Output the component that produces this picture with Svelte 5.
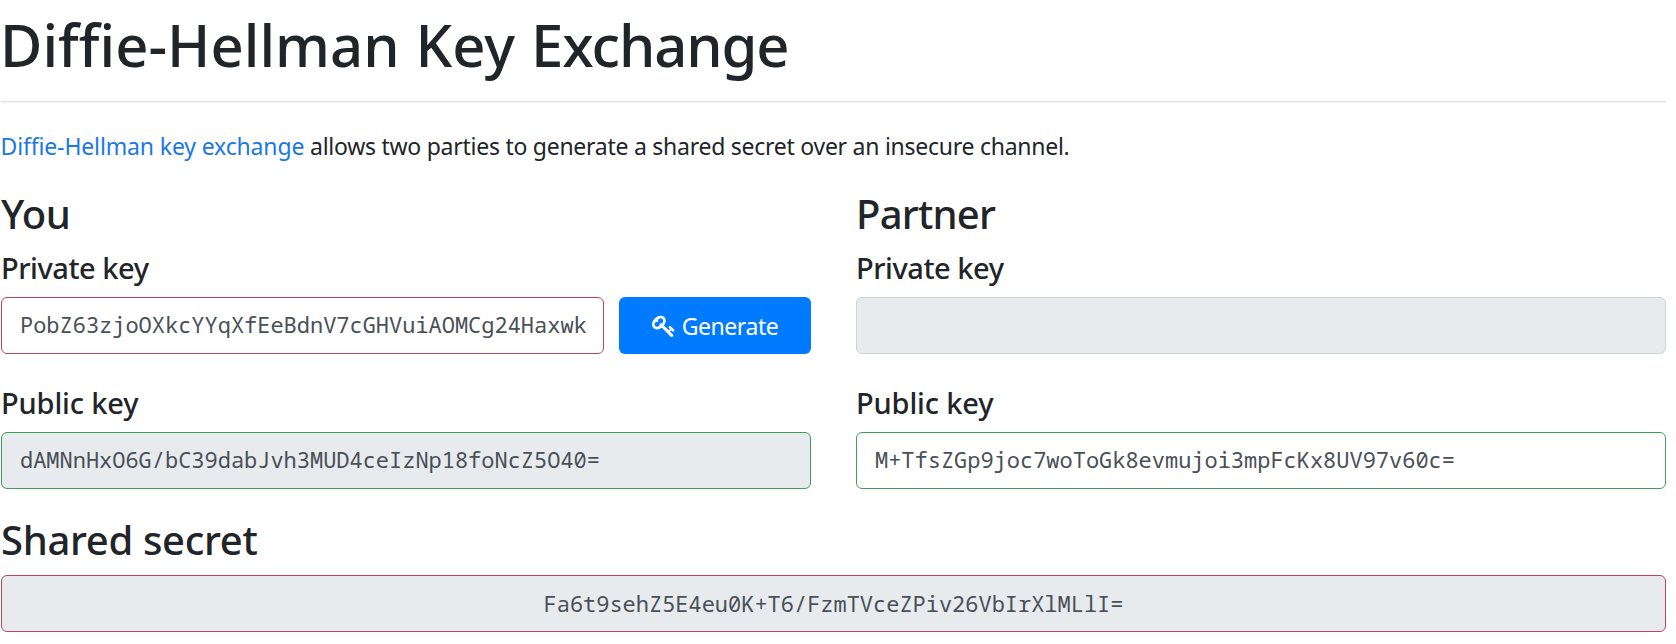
<script>
  let privateKey = $state('PobZ63zjoOXkcYYqXfEeBdnV7cGHVuiAOMCg24Haxwk');
  let partnerPublicKey = $state('M+TfsZGp9joc7woToGk8evmujoi3mpFcKx8UV97v60c=');
  const publicKey = 'dAMNnHxO6G/bC39dabJvh3MUD4ceIzNp18foNcZ5O40=';
  const sharedSecret = 'Fa6t9sehZ5E4eu0K+T6/FzmTVceZPiv26VbIrXlMLlI=';
</script>

<main>
  <h1>Diffie-Hellman Key <span class="tight">Exchange</span></h1>
  <hr />
  <p><a href="#wiki">Diffie-Hellman key exchange</a> allows two parties to generate a shared secret over an insecure channel.</p>

  <div class="columns">
    <section>
      <h2>You</h2>
      <h3 class="private">Private key</h3>
      <div class="group">
        <input class="invalid" aria-label="Private key" spellcheck="false" bind:value={privateKey} />
        <button type="button">
          <svg viewBox="0 0 1792 1792" aria-hidden="true"><path d="M832 512q0-80-56-136t-136-56-136 56-56 136q0 42 19 83-41-19-83-19-80 0-136 56t-56 136 56 136 136 56 136-56 56-136q0-42-19-83 41 19 83 19 80 0 136-56t56-136zm851 704q0 17-49 66t-66 49q-9 0-28.500-16t-36.500-33-38.500-40-24.500-26l-96 96 220 220q28 28 28 68 0 42-39 81t-81 39q-40 0-68-28l-671-671q-176 131-365 131-163 0-265.500-102.500t-102.500-265.500q0-160 95-313t248-248 313-95q163 0 265.500 102.500t102.500 265.500q0 189-131 365l355 355 96-96q-3-3-26-24.500t-40-38.500-33-36.500-16-28.500q0-17 49-66t66-49q13 0 23 10 6 6 46 44.500t82 79.500 86.500 86 73 78 28.500 41z" /></svg>
          <span>Generate</span>
        </button>
      </div>
      <h3 class="public">Public key</h3>
      <input class="valid" aria-label="Public key" readonly value={publicKey} />
    </section>

    <section>
      <h2 class="partner">Partner</h2>
      <h3 class="private">Private key</h3>
      <div class="group"><input aria-label="Partner private key" readonly /></div>
      <h3 class="public">Public key</h3>
      <input class="valid" aria-label="Partner public key" spellcheck="false" bind:value={partnerPublicKey} />
    </section>
  </div>

  <h2 class="shared">Shared secret</h2>
  <input class="invalid center" aria-label="Shared secret" readonly value={sharedSecret} />
</main>

<style>
  :global(body) { background: #fff; }
  main {
    box-sizing: border-box;
    width: 1666px;
    padding: 9px 0 0 1px;
    color: #212529;
    font-family: 'Segoe UI', 'Noto Sans', sans-serif;
  }
  h1, h2, h3, p { margin: 0; font-weight: 500; }
  h1 {
    margin-left: -1px;
    font-size: 58px;
    font-variant-ligatures: none;
    line-height: 72px;
    letter-spacing: 0;
    word-spacing: 1px;
  }
  .tight { letter-spacing: -1.1px; }
  hr {
    height: 1px;
    margin: 20px 0 26px;
    border: 0;
    background: #e0e0e0;
    box-shadow: 0 1px #f2f2f2;
  }
  p {
    margin-left: -0.5px;
    font-size: 23px;
    font-weight: 400;
    line-height: 36px;
    letter-spacing: -0.26px;
  }
  a { color: #1a78e6; text-decoration: none; letter-spacing: -0.14px; }
  .columns {
    display: grid;
    grid-template-columns: 810px 810px;
    column-gap: 45px;
    padding-top: 25px;
  }
  h2 { font-size: 40px; line-height: 50px; letter-spacing: -0.5px; }
  h3 { margin: 0 0 11px; font-size: 29px; line-height: 36px; }
  .partner { letter-spacing: -0.75px; }
  .private { margin-top: 11px; letter-spacing: -0.45px; }
  .public { margin-top: 31px; letter-spacing: -0.15px; }
  .shared { margin-top: 26px; margin-bottom: 10px; letter-spacing: -0.33px; }
  .group { display: flex; gap: 15px; }
  input {
    display: block;
    box-sizing: border-box;
    width: 100%;
    min-width: 0;
    height: 57px;
    margin: 0;
    padding: 0 15px 3px 18px;
    border: 1px solid #ced4da;
    border-radius: 6px;
    outline: 0;
    background: #fff;
    color: #495057;
    font: 22px Consolas, 'Noto Sans Mono', 'DejaVu Sans Mono', monospace;
    letter-spacing: -0.02px;
  }
  input:read-only { background: #e8ebee; }
  .invalid { border-color: #bd4656; }
  .valid { border-color: #3f9f58; }
  .center { padding: 0 18px 1px; text-align: center; }
  button {
    display: flex;
    flex: none;
    align-items: center;
    justify-content: center;
    gap: 6px;
    box-sizing: border-box;
    width: 192px;
    height: 57px;
    padding: 0;
    border: 0;
    border-radius: 6px;
    background: #007bff;
    color: #fff;
    font: 23px 'Segoe UI', 'Noto Sans', sans-serif;
    letter-spacing: -0.45px;
  }
  svg { width: 24px; height: 24px; fill: currentColor; }
</style>
